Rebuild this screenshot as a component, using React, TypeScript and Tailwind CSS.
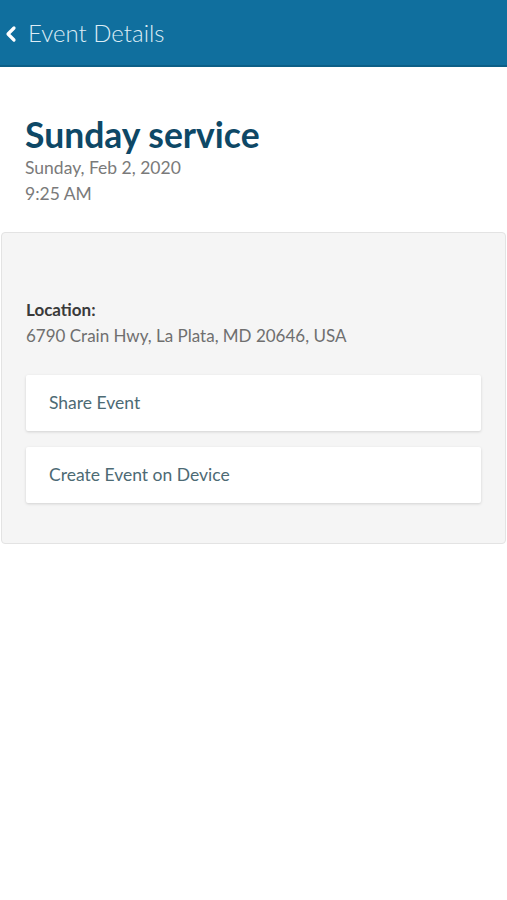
export default function App() {
  return (
    <div className="min-h-screen bg-white font-['Lato','Open_Sans',sans-serif]">
      <header className="flex h-[67px] items-center gap-[10px] border-b-2 border-[#0c5f87] bg-[#106f9e] pl-[4px]">
        <svg width="14" height="18" viewBox="0 0 14 18" className="mt-[2px]">
          <path d="M10 3 L4 9 L10 15" fill="none" stroke="#ffffff" strokeWidth="3.2" strokeLinecap="round" strokeLinejoin="round" />
        </svg>
        <span className="text-[24px] font-light text-[#dcecf5]">Event Details</span>
      </header>

      <section className="px-[25px] pt-[48px] pb-[25px]">
        <h1 className="text-[35.5px] font-bold leading-[40px] text-[#0e4866]">Sunday service</h1>
        <div className="text-[17.5px] leading-[26px] text-[#7a7a7a]">Sunday, Feb 2, 2020</div>
        <div className="text-[17.5px] leading-[26px] text-[#7a7a7a]">9:25 AM</div>
      </section>

      <section className="mx-px rounded-[4px] border border-[#e3e3e3] bg-[#f5f5f5] px-[24px] pt-[64px] pb-[40px]">
        <div className="text-[17px] font-bold leading-[26px] text-[#3a3a3a]">Location:</div>
        <div className="text-[17px] leading-[26px] text-[#6f6f6f]">6790 Crain Hwy, La Plata, MD 20646, USA</div>
        <div className="mt-[26px] flex flex-col gap-[16px]">
          <button className="flex h-[56px] items-center rounded-[2px] bg-white px-[23px] text-left text-[17.5px] text-[#4d6a74] shadow-[0_1px_3px_rgba(0,0,0,0.15)]">
            Share Event
          </button>
          <button className="flex h-[56px] items-center rounded-[2px] bg-white px-[23px] text-left text-[17.5px] text-[#4d6a74] shadow-[0_1px_3px_rgba(0,0,0,0.15)]">
            Create Event on Device
          </button>
        </div>
      </section>
    </div>
  );
}
